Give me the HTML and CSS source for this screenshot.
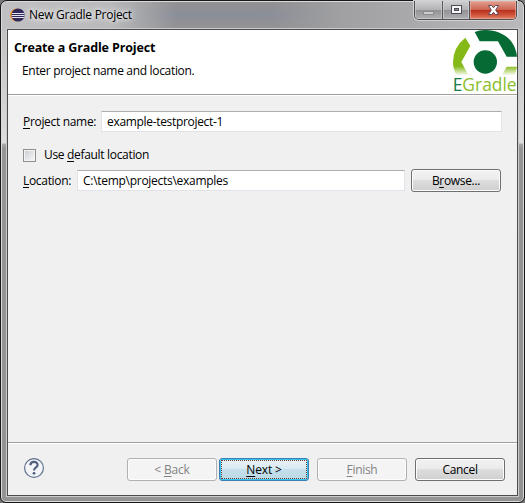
FILE: index.html
```html
<!DOCTYPE html>
<html lang="en">
<head>
<meta charset="utf-8">
<title>New Gradle Project</title>
<link rel="stylesheet" href="styles.css">
</head>
<body>
<div class="window">
  <div class="titlebar">
    <svg class="eclipse" width="15" height="14" viewBox="0 0 15 14">
      <circle cx="6.5" cy="7" r="6.5" fill="#f39a34"/>
      <circle cx="8" cy="7" r="6.6" fill="#302858"/>
      <path d="M2 5.5h12M1.6 7.5h12.8M2 9.5h12" stroke="#e4e3f3" stroke-width="1"/>
    </svg>
    <span class="caption">New Gradle Project</span>
    <div class="controls">
      <div class="control min"><svg width="13" height="12"><rect x="1.5" y="7.5" width="10" height="3" fill="#ccc" stroke="#8b8b90"/></svg></div>
      <div class="control max"><svg width="13" height="12"><rect x="1.5" y="1.5" width="10" height="8" fill="#f5f5f5" stroke="#4b4c56"/><rect x="4.5" y="4.5" width="4" height="2" fill="#8a8b92" stroke="#4b4c56"/></svg></div>
      <div class="control close"><svg width="13" height="12"><path d="M1.5 1.5h3.2l1.8 2.3 1.8-2.3h3.2L8.7 6l2.8 4.5H8.3L6.5 8.2l-1.8 2.3H1.5L4.3 6z" fill="#fff" stroke="#5b4b58"/></svg></div>
    </div>
  </div>
  <div class="client">
    <header class="header">
      <div class="headings">
        <h1><span class="heading">Create a Gradle Project</span></h1>
        <p><span class="description">Enter project name and location.</span></p>
      </div>
      <svg class="logo" width="66" height="64" viewBox="18 15 198 192">
        <defs>
          <linearGradient id="fade" gradientUnits="userSpaceOnUse" x1="0" y1="100" x2="0" y2="152"><stop offset="0" stop-color="#84b917"/><stop offset=".45" stop-color="#84b917"/><stop offset="1" stop-color="#fff"/></linearGradient>
        </defs>
        <path d="M89 21Q103 15 121 15C174 15 212 48 216 95H185L159 49H104Z" fill="#066a35"/>
        <path d="M61 38L76 63L49 111L70 150H34Q24 132 24 111Q25 66 61 38Z" fill="url(#fade)"/>
        <path d="M185 125H216Q214 138 209 150H171Z" fill="url(#fade)"/>
        <circle cx="121" cy="111" r="35" fill="#066a35"/>
        <text x="23" y="198" textLength="192" lengthAdjust="spacingAndGlyphs" class="brand"><tspan fill="#177b43">E</tspan><tspan fill="#8abe2f">Gradle</tspan></text>
      </svg>
    </header>
    <main class="form">
      <div class="row name-row"><label class="name-label"><u>P</u>roject name:</label><div class="field name-field"><span class="name-value">example-testproject-1</span></div></div>
      <div class="row check-row"><span class="checkbox"></span><label class="check-label">Use <u>d</u>efault location</label></div>
      <div class="row location-row"><label class="location-label"><u>L</u>ocation:</label><div class="field location-field"><span class="location-value">C:\temp\projects\examples</span></div><div class="button browse"><span class="browse-text">B<u>r</u>owse...</span></div></div>
    </main>
    <footer class="footer">
      <svg class="help" width="22" height="22" viewBox="0 0 22 22">
        <circle cx="11" cy="11" r="9.4" fill="#f4f5f8" stroke="#61718f" stroke-width="1.2"/>
        <path d="M7.4 8.3C7.4 3.9 14.6 3.9 14.6 8C14.6 10.4 11 10.3 11 13.4" fill="none" stroke="#50617f" stroke-width="2.2"/>
        <circle cx="11" cy="16.3" r="1.4" fill="#50617f"/>
      </svg>
      <div class="button disabled back"><span class="back-text">&lt; <u>B</u>ack</span></div>
      <div class="button primary next"><span class="next-text"><u>N</u>ext &gt;</span></div>
      <div class="button disabled finish"><span class="finish-text"><u>F</u>inish</span></div>
      <div class="button cancel"><span class="cancel-text">Cancel</span></div>
    </footer>
  </div>
</div>
</body>
</html>
```
FILE: styles.css
```css
* { box-sizing: border-box; }
body { margin: 0; background: #777; font: 12px/16px "Open Sans", "Noto Sans", sans-serif; color: #000; letter-spacing: -.32px; }
span, label { white-space: nowrap; }
u { text-decoration: underline; text-underline-offset: 2px; text-decoration-thickness: 1px; text-decoration-skip-ink: none; }

.window {
  width: 525px; height: 503px; padding: 0 6px 6px;
  border: 1px solid #17171a; border-radius: 7px 7px 6px 6px;
  background:
    linear-gradient(90deg, #c0bfc1 0, #b9b9bb 110px, transparent 175px) 0 0 / 100% 28px no-repeat,
    linear-gradient(90deg, transparent 270px, #a0a0a2 340px, #aaaaac 415px, #b8b8ba) 0 0 / 100% 28px no-repeat,
    linear-gradient(#929192, #8b8f98 50%, #929294 90%) 0 0 / 100% 28px no-repeat,
    linear-gradient(#bbb 0, #dedcdd 142px, #aaa 143px, #969596 147px, #949394) 0 0 / 100% 100%;
  box-shadow: inset 0 0 0 1px #dadada;
}
.titlebar { height: 28px; display: flex; align-items: flex-start; padding: 0 1px 0 3px; }
.eclipse { margin-top: 7px; flex: none; }
.caption { margin: 6px 0 0 4px; letter-spacing: -.28px; text-shadow: 0 0 5px #fff, 0 0 9px #fff; }
.controls { margin-left: auto; display: flex; width: 103px; height: 19px; border: 1px solid #4d4d52; border-top: 0; border-radius: 0 0 5px 5px; overflow: hidden; box-shadow: 0 0 0 1px #d1d1d3; }
.control { display: flex; align-items: center; justify-content: center; border-right: 1px solid #55555a; background: linear-gradient(#cfcfd1, #b2b2b4 48%, #929295 52%, #b0b0b2); box-shadow: inset 0 0 0 1px #d6d6d899; }
.control.min { width: 28px; }
.control.max { width: 27px; }
.control.close { width: 46px; border: 0; background: linear-gradient(#e2a193, #cf6553 47%, #b8311c 52%, #cf5038 75%, #de8266); box-shadow: inset 0 0 0 1px #eeb4a599; }

.client { height: 467px; border: 1px solid #4c4b4d; background: #f0f0f0; box-shadow: 0 0 0 1px #cbcbcb; display: flex; flex-direction: column; }
.header { display: flex; justify-content: space-between; height: 66px; flex: none; background: #fff; border-bottom: 1px solid #fff; box-shadow: inset 0 -1px #a0a0a0; }
.headings { padding: 9px 0 0 6px; }
.headings h1 { margin: 0; font-size: 12.5px; line-height: 18px; }
.headings p { margin: 6px 0 0 8px; }
.heading { letter-spacing: -.13px; }
.logo { flex: none; overflow: visible; }
.brand { font: 56px "Open Sans", sans-serif; letter-spacing: 0; }

.form { padding: 15px 15px 0 15px; flex: 1; }
.row { display: flex; align-items: center; }
.field { height: 21px; background: #fff; border: 1px solid #e2e3ea; border-top-color: #abadb3; border-radius: 1px; padding: 2px 0 0 5px; }
.name-label { width: 78px; }
.name-field { flex: 1; }
.check-row { height: 16px; margin-top: 15px; }
.checkbox { width: 13px; height: 13px; border: 1px solid #8e8f8f; background: linear-gradient(135deg, #cbcfd5, #f6f6f6) 50% / 9px 9px no-repeat, #f4f4f4; }
.check-label { margin-left: 8px; }
.location-row { margin-top: 6px; height: 23px; }
.location-label { width: 54px; }
.location-field { width: 328px; }
.location-value { letter-spacing: -.28px; }

.button { width: 90px; height: 23px; border: 1px solid #707070; border-radius: 3px; background: linear-gradient(#f2f2f2, #ebebeb 49%, #dddddd 50%, #cfcfcf); box-shadow: inset 0 0 0 1px #fcfcfc; display: flex; align-items: center; justify-content: center; flex: none; }
.browse { margin-left: 6px; }
.disabled { color: #838383; background: #f4f4f4; border-color: #adb2b5; }
.primary { position: relative; border-color: #3c7fb1; background: linear-gradient(#eaf3f8, #d9eaf2 49%, #c5dfeb 50%, #bbd8e6); box-shadow: inset 0 0 0 1px #35c5f3; }
.primary::after { content: ""; position: absolute; inset: 1px; border: 1px dotted #713c27; }

.footer { height: 53px; flex: none; display: flex; align-items: flex-start; border-top: 1px solid #a0a0a0; box-shadow: inset 0 1px #fff; padding: 15px 11px 0 15px; }
.help { flex: none; margin-top: -1px; }
.back { margin-left: 82px; }
.next { margin-left: 2px; }
.finish { margin-left: 8px; }
.cancel { margin-left: 8px; }
.back-text, .next-text { letter-spacing: -.15px; }
```
